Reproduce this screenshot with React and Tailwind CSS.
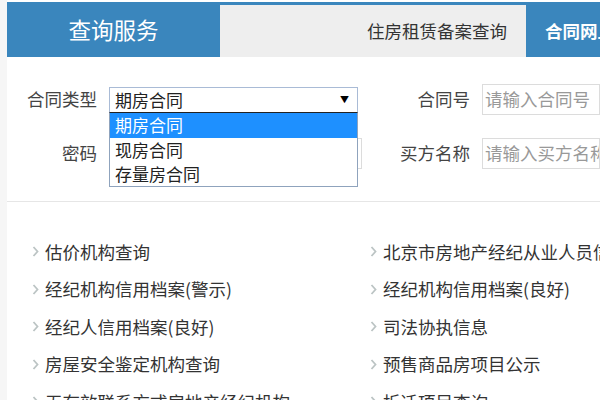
import React from 'react';

const leftLinks = [
  '估价机构查询',
  '经纪机构信用档案(警示)',
  '经纪人信用档案(良好)',
  '房屋安全鉴定机构查询',
  '无有效联系方式房地产经纪机构',
];

const rightLinks = [
  '北京市房地产经纪从业人员信息查询',
  '经纪机构信用档案(良好)',
  '司法协执信息',
  '预售商品房项目公示',
  '拆迁项目查询',
];

const options = ['期房合同', '现房合同', '存量房合同'];

const Chevron = () => (
  <svg width="7" height="11" viewBox="0 0 7 11" className="shrink-0">
    <polyline points="1.5,1 5.5,5.5 1.5,10" fill="none" stroke="#bcc4c4" strokeWidth="1.8" />
  </svg>
);

const LinkItem = ({ label }) => (
  <div className="h-[37.5px] flex items-center gap-[6px] whitespace-nowrap">
    <Chevron />
    <span className="text-[17.5px] text-[#333]">{label}</span>
  </div>
);

export default function App() {
  return (
    <div
      className="w-[600px] h-[400px] overflow-hidden bg-[#f6f6f6] pl-[7px]"
      style={{ fontFamily: '"Microsoft YaHei", "Noto Sans CJK SC", "Noto Sans", sans-serif' }}
    >
      <div className="h-full bg-white">
        {/* Tabs */}
        <div className="flex h-[57px] pt-[2px] bg-white">
          <div className="w-[213px] bg-[#3a86bd] flex items-center justify-center text-white text-[22.5px]">
            查询服务
          </div>
          <div className="flex-1 flex bg-[#3a86bd] pt-[3px] overflow-hidden">
            <div className="w-[306px] bg-[#eeeeee] flex items-center justify-end pr-[19px] text-[17.5px] text-[#333] whitespace-nowrap">
              住房租赁备案查询
            </div>
            <div className="flex-1 flex items-center pl-[19px] text-white font-bold text-[17.5px] whitespace-nowrap overflow-hidden">
              合同网上签约查询
            </div>
          </div>
        </div>

        {/* Form */}
        <div className="pt-[27px] text-[17.5px] text-[#444]">
          <div className="flex items-center h-[31px]">
            <div className="w-[90px] text-right">合同类型</div>
            <div className="ml-[12px] w-[253px] relative">
              <div className="w-[249px] h-[26px] border border-[#a9bbd6] bg-white flex items-center justify-between pl-[5px] pr-[8px] text-[17px] text-[#222]">
                <span>期房合同</span>
                <span className="text-[9px] text-black">▼</span>
              </div>
              <div className="absolute left-0 top-[25px] w-[249px] border border-[#8fa3bd] border-t-[#222] bg-white z-10 text-[17px]">
                {options.map((o, i) => (
                  <div
                    key={o}
                    className={
                      i === 0
                        ? 'h-[25px] flex items-center pl-[5px] bg-[#1e90ff] text-white'
                        : 'h-[24px] flex items-center pl-[5px] text-[#222]'
                    }
                  >
                    {o}
                  </div>
                ))}
              </div>
            </div>
            <div className="w-[108px] text-right">合同号</div>
            <div className="ml-[12px] flex-1 h-[31px] border border-[#dcdcdc] flex items-center pl-[2px] text-[#999] whitespace-nowrap overflow-hidden">
              请输入合同号
            </div>
          </div>

          <div className="flex items-center h-[31px] mt-[23px]">
            <div className="w-[90px] text-right">密码</div>
            <div className="ml-[12px] w-[253px] h-[31px] border border-[#dcdcdc]"></div>
            <div className="w-[108px] text-right">买方名称</div>
            <div className="ml-[12px] flex-1 h-[31px] border border-[#dcdcdc] flex items-center pl-[2px] text-[#999] whitespace-nowrap overflow-hidden">
              请输入买方名称
            </div>
          </div>
        </div>

        {/* Divider */}
        <div className="mt-[32px] border-t border-[#e6e6e6]"></div>

        {/* Links */}
        <div className="flex pt-[31px] pl-[25px]">
          <div className="w-[338px]">
            {leftLinks.map((l) => (
              <LinkItem key={l} label={l} />
            ))}
          </div>
          <div className="flex-1 overflow-hidden">
            {rightLinks.map((l) => (
              <LinkItem key={l} label={l} />
            ))}
          </div>
        </div>
      </div>
    </div>
  );
}
